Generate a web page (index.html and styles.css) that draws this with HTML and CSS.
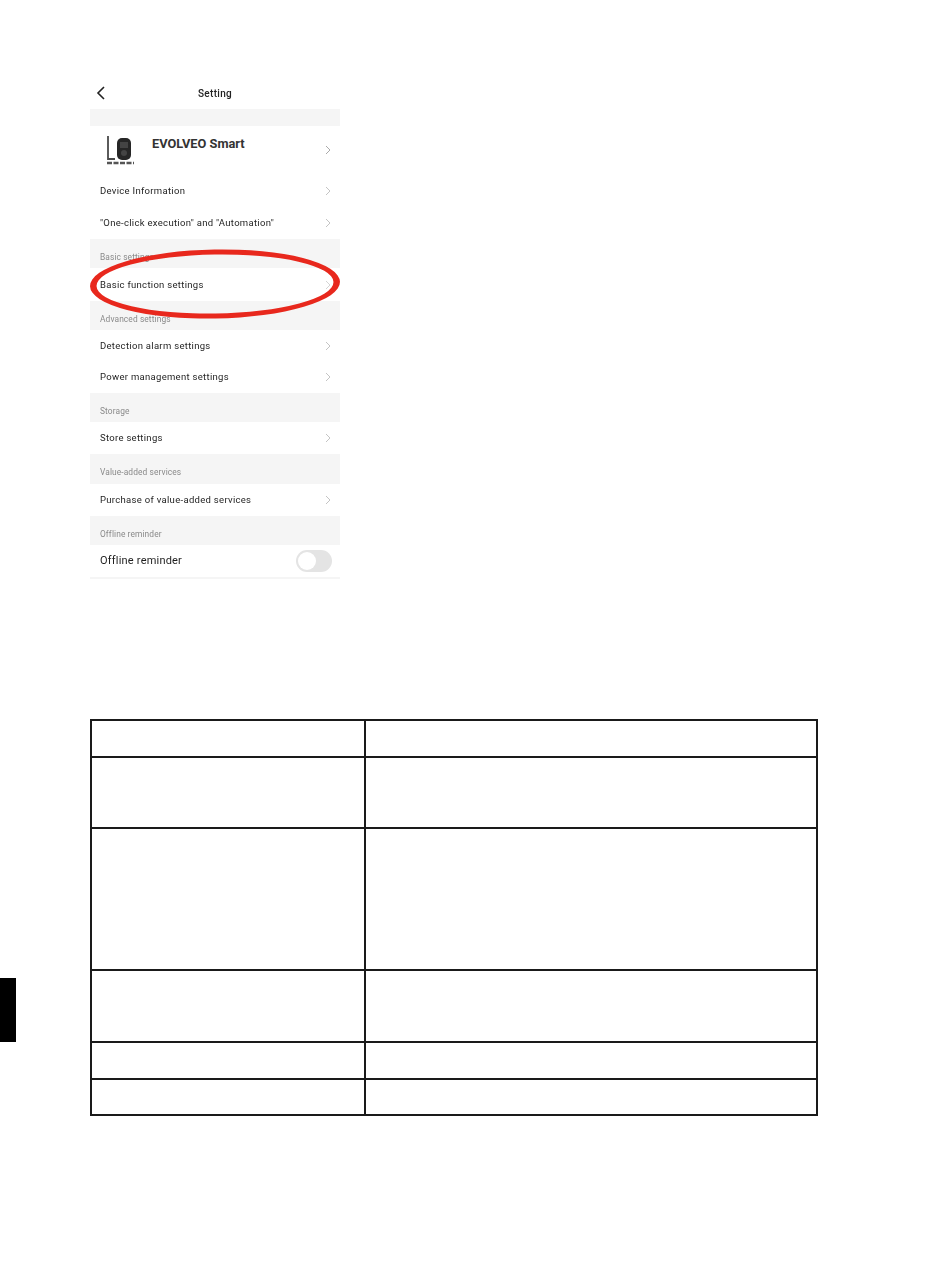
FILE: index.html
```html
<!DOCTYPE html>
<html lang="en">
<head>
  <meta charset="UTF-8">
  <title>Setting</title>
  <link rel="stylesheet" href="styles.css">
</head>
<body>

<div class="phone">
  <div class="shot">
    <div class="topbar">
      <svg class="back" width="10" height="16" viewBox="0 0 10 16"><path d="M8 2 L2 8 L8 14" fill="none" stroke="#222" stroke-width="1.6"/></svg>
      <span class="topbar-title">Setting</span>
    </div>
    <div class="gap gap-top"></div>

    <div class="device">
      <svg class="thumb" width="32" height="34" viewBox="0 0 32 34">
        <path d="M3 2 V25 H10" fill="none" stroke="#4a4a4a" stroke-width="1.8"/>
        <rect x="12" y="4" width="14" height="22" rx="5" fill="#262626"/>
        <rect x="15" y="8" width="8" height="6" fill="#444"/>
        <circle cx="19" cy="19" r="3" fill="#444"/>
        <path d="M2 29 H29" stroke="#555" stroke-width="2.4" stroke-dasharray="5 1.5"/>
      </svg>
      <span class="device-name">EVOLVEO Smart</span>
      <svg class="chev chev-device" width="6" height="10" viewBox="0 0 6 10"><path d="M1 1 L5 5 L1 9" fill="none" stroke="#aaa" stroke-width="1"/></svg>
    </div>
    <div class="row"><span>Device Information</span><svg class="chev" width="6" height="10" viewBox="0 0 6 10"><path d="M1 1 L5 5 L1 9" fill="none" stroke="#c4c4c4" stroke-width="1"/></svg></div>
    <div class="row"><span>"One-click execution" and "Automation"</span><svg class="chev" width="6" height="10" viewBox="0 0 6 10"><path d="M1 1 L5 5 L1 9" fill="none" stroke="#c4c4c4" stroke-width="1"/></svg></div>

    <div class="section"><span>Basic settings</span></div>
    <div class="row row-tall"><span>Basic function settings</span><svg class="chev" width="6" height="10" viewBox="0 0 6 10"><path d="M1 1 L5 5 L1 9" fill="none" stroke="#d4d4d4" stroke-width="1"/></svg></div>

    <div class="section"><span>Advanced settings</span></div>
    <div class="row row-short"><span>Detection alarm settings</span><svg class="chev" width="6" height="10" viewBox="0 0 6 10"><path d="M1 1 L5 5 L1 9" fill="none" stroke="#c4c4c4" stroke-width="1"/></svg></div>
    <div class="row"><span>Power management settings</span><svg class="chev" width="6" height="10" viewBox="0 0 6 10"><path d="M1 1 L5 5 L1 9" fill="none" stroke="#c4c4c4" stroke-width="1"/></svg></div>

    <div class="section"><span>Storage</span></div>
    <div class="row"><span>Store settings</span><svg class="chev" width="6" height="10" viewBox="0 0 6 10"><path d="M1 1 L5 5 L1 9" fill="none" stroke="#c4c4c4" stroke-width="1"/></svg></div>

    <div class="section section-tall"><span>Value-added services</span></div>
    <div class="row"><span>Purchase of value-added services</span><svg class="chev" width="6" height="10" viewBox="0 0 6 10"><path d="M1 1 L5 5 L1 9" fill="none" stroke="#c4c4c4" stroke-width="1"/></svg></div>

    <div class="section"><span>Offline reminder</span></div>
    <div class="row row-switch"><span>Offline reminder</span><div class="switch"><div class="knob"></div></div></div>
    <div class="gap gap-end"></div>
  </div>

  <svg class="circle" width="260" height="76" viewBox="0 0 260 76">
    <path fill="#e8281d" fill-rule="evenodd" transform="rotate(-1 130 38)" d="M5 38 A125 34.5 0 1 1 255 38 A125 34.5 0 1 1 5 38 Z M11.5 38 A118.5 29.5 0 1 0 248.5 38 A118.5 29.5 0 1 0 11.5 38 Z"/>
  </svg>
</div>

<div class="lower">
  <div class="edge-tab"></div>
  <table class="grid">
    <tr class="r37"><td class="col-a"></td><td></td></tr>
    <tr class="r71"><td></td><td></td></tr>
    <tr class="r142"><td></td><td></td></tr>
    <tr class="r72"><td></td><td></td></tr>
    <tr class="r37"><td></td><td></td></tr>
    <tr class="r36"><td></td><td></td></tr>
  </table>
</div>

</body>
</html>
```

FILE: styles.css
```css
* { box-sizing: border-box; }
body {
  margin: 0;
  background: #fff;
  font-family: Roboto, "Liberation Sans", sans-serif;
  color: #222;
}

.phone {
  position: relative;
  width: 250px;
  height: 505px;
  margin: 75px 0 0 90px;
}
.shot {
  filter: blur(0.4px);
}

.topbar {
  height: 34px;
  display: flex;
  align-items: center;
  justify-content: center;
  position: relative;
  font-size: 10px;
  font-weight: 500;
  letter-spacing: 0.3px;
}
.back {
  position: absolute;
  left: 6px;
  top: 10px;
}
.topbar-title { margin-top: 2px; }

.gap { background: #f5f5f5; }
.gap-top { height: 17px; }
.gap-end { height: 2px; }

.device {
  height: 49px;
  display: flex;
  align-items: flex-start;
  padding: 8px 9px 0 15px;
  background: #fff;
}
.thumb { flex: none; }
.device-name {
  margin: 2px 0 0 15px;
  font-size: 12.8px;
  font-weight: 700;
  color: #333;
}
.chev-device { margin: 11px 0 0 auto; }

.row {
  height: 32px;
  display: flex;
  align-items: center;
  justify-content: space-between;
  padding: 0 9px 0 10px;
  font-size: 9.5px;
  letter-spacing: 0.3px;
  color: #1e1e1e;
}
.row span { margin-top: -1px; }
.row-tall { height: 33px; }
.row-short { height: 31px; }

.section {
  height: 29px;
  padding: 13px 0 0 10px;
  background: #f5f5f5;
  font-size: 8.4px;
  letter-spacing: 0.1px;
  color: #8a8a8a;
}
.section-tall { height: 30px; }

.row-switch {
  padding-right: 8px;
  font-size: 11px;
  letter-spacing: 0.2px;
}
.switch {
  width: 36px;
  height: 22px;
  padding: 2px;
  border-radius: 11px;
  background: #e4e4e4;
}
.knob {
  width: 18px;
  height: 18px;
  border-radius: 50%;
  background: #fff;
}

.circle {
  position: absolute;
  left: -5px;
  top: 171px;
}

.lower {
  display: flex;
  margin-top: 139px;
}
.edge-tab {
  flex: none;
  width: 16px;
  height: 64px;
  margin-top: 259px;
  background: #000;
}
.grid {
  width: 728px;
  margin-left: 74px;
  border-collapse: collapse;
  table-layout: fixed;
}
.grid td {
  border: 2px solid #1a1a1a;
  padding: 0;
}
.col-a { width: 274px; }
.r37 { height: 37px; }
.r36 { height: 36px; }
.r71 { height: 71px; }
.r72 { height: 72px; }
.r142 { height: 142px; }
```
